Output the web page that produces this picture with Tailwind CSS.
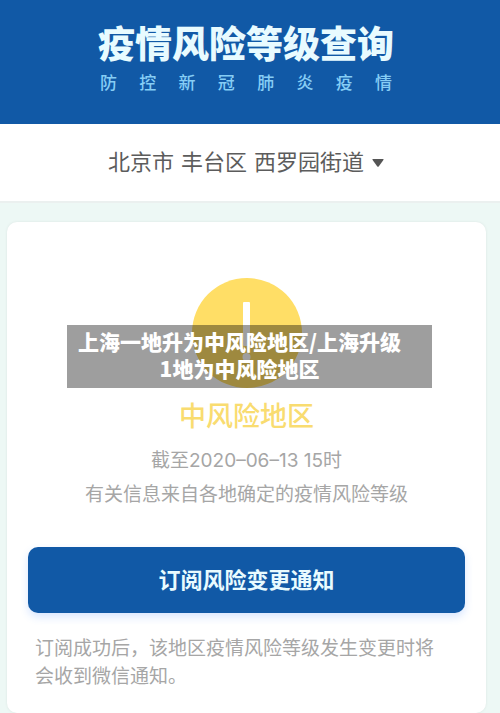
<!DOCTYPE html>
<html lang="zh-CN">
<head>
  <meta charset="UTF-8" />
  <meta name="viewport" content="width=device-width, initial-scale=1.0" />
  <title>疫情风险等级查询</title>
  <script src="https://cdn.jsdelivr.net/npm/@tailwindcss/browser@4"></script>
</head>
<body class="bg-[#edf8f5] min-h-screen flex flex-col font-['Liberation_Sans','Noto_Sans_CJK_SC',sans-serif]">
  <header class="bg-[#1159a6] pt-[22px] pb-[26px] pr-2 flex flex-col items-center">
    <h1 class="text-[37px] leading-[48px] font-black text-[#e8fbff]">疫情风险等级查询</h1>
    <p class="w-[292px] flex justify-between text-[17px] leading-7 font-medium text-[#86cdf5]">
      <span>防</span><span>控</span><span>新</span><span>冠</span><span>肺</span><span>炎</span><span>疫</span><span>情</span>
    </p>
  </header>

  <div class="bg-white border-b-2 border-[#ebf0ef] pr-2 h-[79px] flex items-center justify-center">
    <label for="area" class="sr-only">选择地区</label>
    <div class="relative">
      <select id="area" class="appearance-none bg-transparent h-10 text-[22px] text-[#5c5c5c] pr-5 font-['DejaVu_Sans','Noto_Sans_CJK_SC',sans-serif]">
        <option>北京市 丰台区 西罗园街道</option>
      </select>
      <svg class="absolute right-0 top-4 w-3 h-2 pointer-events-none" viewBox="0 0 12 8" fill="#555">
        <path d="M1 0h10q1 0 .4 .9L6.700 7.400q-.7 .8-1.400 0L.6 .9Q0 0 1 0z" />
      </svg>
    </div>
  </div>

  <main class="flex-1 flex flex-col pt-[19px] pl-[7px] pr-[14px]">
    <section class="flex-1 bg-white rounded-[10px] shadow-[0_0_3px_rgba(0,0,0,0.08)] px-[21px] pt-14 pb-5 text-[19px] text-[#a6a6a6]">
      <div class="relative flex flex-col items-center text-center">
        <svg class="w-[110px] h-[110px]" viewBox="0 0 110 110">
          <circle cx="55" cy="55" r="55" fill="#ffde66" />
          <rect x="51" y="24" width="7" height="44" rx="1" fill="#fff" />
          <circle cx="54.500" cy="79" r="4" fill="#fff" />
        </svg>
        <p class="mt-[9px] text-[27px] leading-10 font-medium text-[#f9dc70]">中风险地区</p>
        <p class="mt-[7px] leading-[34px] font-['Inter','Noto_Sans_CJK_SC',sans-serif]">截至2020–06–13 15时</p>
        <p class="leading-[34px]">有关信息来自各地确定的疫情风险等级</p>

        <!-- 新闻标题条 -->
        <div class="absolute top-[47px] left-[39px] right-[33px] bg-black/38 pt-[3px] pb-[6px] pr-5 text-[21px] leading-[27px] font-black text-white font-['Noto_Sans_CJK_SC',sans-serif]">
          <h2>上海一地升为中风险地区/上海升级<br />1地为中风险地区</h2>
        </div>
      </div>

      <button type="button" class="mt-[35px] w-full h-[66px] rounded-[10px] bg-[#1159a6] text-[22px] font-bold text-[#e8fbff] shadow-[0_4px_8px_rgba(60,130,255,0.2)]">订阅风险变更通知</button>
      <p class="mt-[22px] pl-[7px] pr-4 leading-7">订阅成功后，该地区疫情风险等级发生变更时将会收到微信通知。</p>
    </section>
  </main>
</body>
</html>
